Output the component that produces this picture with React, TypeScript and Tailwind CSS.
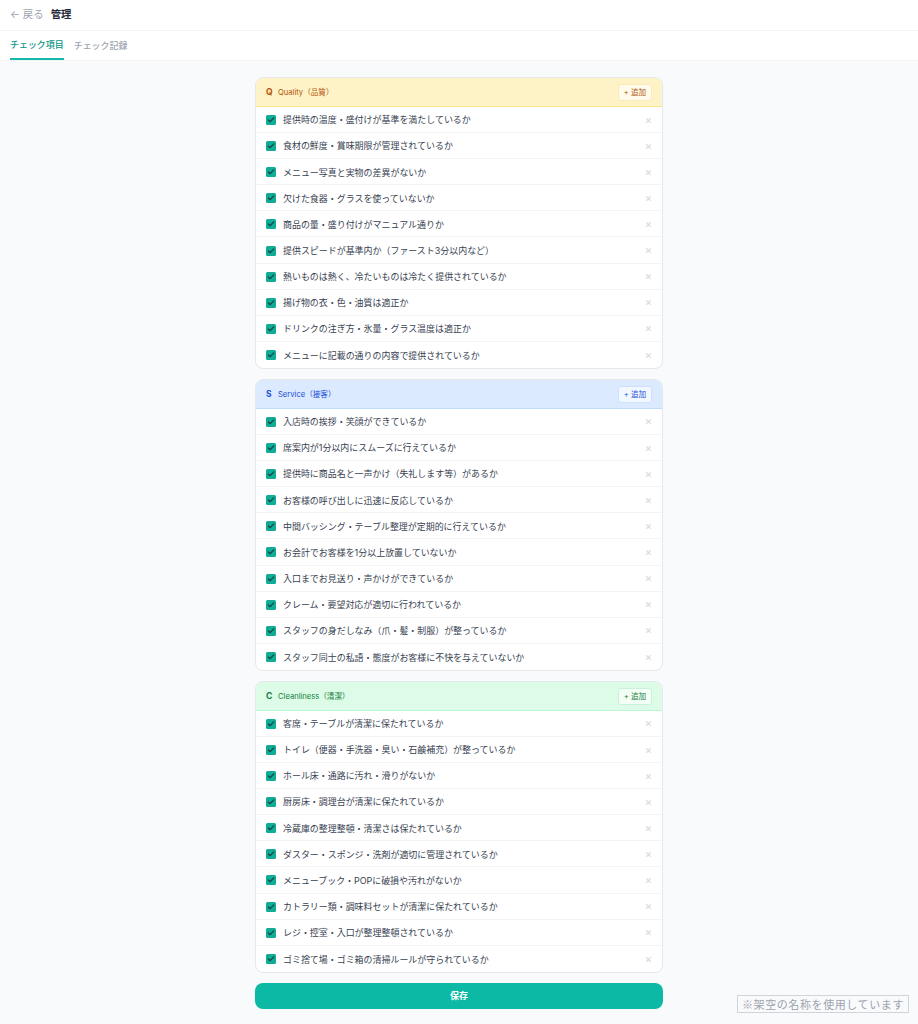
import { Check } from "lucide-react";

const sections = [
  {
    letter: "Q",
    title: "Quality（品質）",
    headerClass: "bg-[#fef3c7] border-[#fde68a]",
    textClass: "text-[#b45309]",
    buttonClass: "border-[#fde9b8]",
    items: [
      "提供時の温度・盛付けが基準を満たしているか",
      "食材の鮮度・賞味期限が管理されているか",
      "メニュー写真と実物の差異がないか",
      "欠けた食器・グラスを使っていないか",
      "商品の量・盛り付けがマニュアル通りか",
      "提供スピードが基準内か（ファースト3分以内など）",
      "熱いものは熱く、冷たいものは冷たく提供されているか",
      "揚げ物の衣・色・油質は適正か",
      "ドリンクの注ぎ方・氷量・グラス温度は適正か",
      "メニューに記載の通りの内容で提供されているか",
    ],
  },
  {
    letter: "S",
    title: "Service（接客）",
    headerClass: "bg-[#dbeafe] border-[#bfdbfe]",
    textClass: "text-[#1d4ed8]",
    buttonClass: "border-[#cfe0fb]",
    items: [
      "入店時の挨拶・笑顔ができているか",
      "席案内が1分以内にスムーズに行えているか",
      "提供時に商品名と一声かけ（失礼します等）があるか",
      "お客様の呼び出しに迅速に反応しているか",
      "中間バッシング・テーブル整理が定期的に行えているか",
      "お会計でお客様を1分以上放置していないか",
      "入口までお見送り・声かけができているか",
      "クレーム・要望対応が適切に行われているか",
      "スタッフの身だしなみ（爪・髪・制服）が整っているか",
      "スタッフ同士の私語・態度がお客様に不快を与えていないか",
    ],
  },
  {
    letter: "C",
    title: "Cleanliness（清潔）",
    headerClass: "bg-[#dcfce7] border-[#bbf7d0]",
    textClass: "text-[#15803d]",
    buttonClass: "border-[#c9f2d8]",
    items: [
      "客席・テーブルが清潔に保たれているか",
      "トイレ（便器・手洗器・臭い・石鹸補充）が整っているか",
      "ホール床・通路に汚れ・滑りがないか",
      "厨房床・調理台が清潔に保たれているか",
      "冷蔵庫の整理整頓・清潔さは保たれているか",
      "ダスター・スポンジ・洗剤が適切に管理されているか",
      "メニューブック・POPに破損や汚れがないか",
      "カトラリー類・調味料セットが清潔に保たれているか",
      "レジ・控室・入口が整理整頓されているか",
      "ゴミ捨て場・ゴミ箱の清掃ルールが守られているか",
    ],
  },
];

function CheckRow({ label }: { label: string }) {
  return (
    <div className="flex h-[26.1px] items-center border-b border-[#f3f4f6] pl-[10px] pr-[10px] pt-[1px] last:border-b-0">
      <span className="flex h-[10px] w-[10px] shrink-0 items-center justify-center rounded-[1.5px] bg-[#10ac96]">
        <Check className="h-[8px] w-[8px] text-[#134e4a]" strokeWidth={4} />
      </span>
      <span className="ml-[7px] flex-1 text-[8.96px] text-[#374151]">{label}</span>
      <span className="text-[11px] leading-none text-[#d1d5db]">×</span>
    </div>
  );
}

export default function App() {
  return (
    <div
      className="relative min-h-[1024px] bg-[#f9fafb]"
      style={{ fontFamily: '"Inter", "Noto Sans CJK JP", sans-serif' }}
    >
      <header className="flex h-[31px] items-center gap-[7px] border-b border-[#f3f4f6] bg-white px-[10px]">
        <span className="text-[10.4px] text-[#9ca3af]">← 戻る</span>
        <span className="text-[10.4px] font-bold text-[#1f2937]">管理</span>
      </header>

      <nav className="flex h-[30px] gap-[10px] border-b border-[#f3f4f6] bg-white px-[10px]">
        <span className="flex items-center border-b-2 border-[#14b8a6] text-[8.96px] font-medium text-[#0d9488]">
          チェック項目
        </span>
        <span className="flex items-center text-[8.96px] font-medium text-[#9ca3af]">チェック記録</span>
      </nav>

      <main className="mx-auto flex w-[408px] flex-col gap-[10px] pt-[16px]">
        {sections.map((section) => (
          <section
            key={section.letter}
            className="overflow-hidden rounded-[8px] border border-[#e5e7eb] bg-white"
          >
            <div className={`flex h-[29px] items-center border-b px-[10px] pt-[1px] ${section.headerClass}`}>
              <span className={`w-[12px] text-[8.5px] font-bold ${section.textClass}`}>{section.letter}</span>
              <span className={`text-[7.6px] ${section.textClass}`}>{section.title}</span>
              <button
                className={`ml-auto flex h-[17px] w-[34px] items-center justify-center rounded-[3px] border bg-[#ffffffa6] text-[7.6px] ${section.buttonClass} ${section.textClass}`}
              >
                + 追加
              </button>
            </div>
            {section.items.map((item) => (
              <CheckRow key={item} label={item} />
            ))}
          </section>
        ))}
        <button className="h-[26px] rounded-[8px] bg-[#0cb9a4] text-[8.96px] font-bold text-white">保存</button>
      </main>

      <div
        className="absolute left-[737px] top-[995px] flex h-[18px] w-[172px] items-center justify-center whitespace-nowrap border border-[#d1d5db] bg-[#f9fafb] text-[11px] tracking-[0.6px] text-[#9ca3af]"
        style={{ fontFamily: '"Noto Sans CJK JP", sans-serif' }}
      >
        ※架空の名称を使用しています
      </div>
    </div>
  );
}
